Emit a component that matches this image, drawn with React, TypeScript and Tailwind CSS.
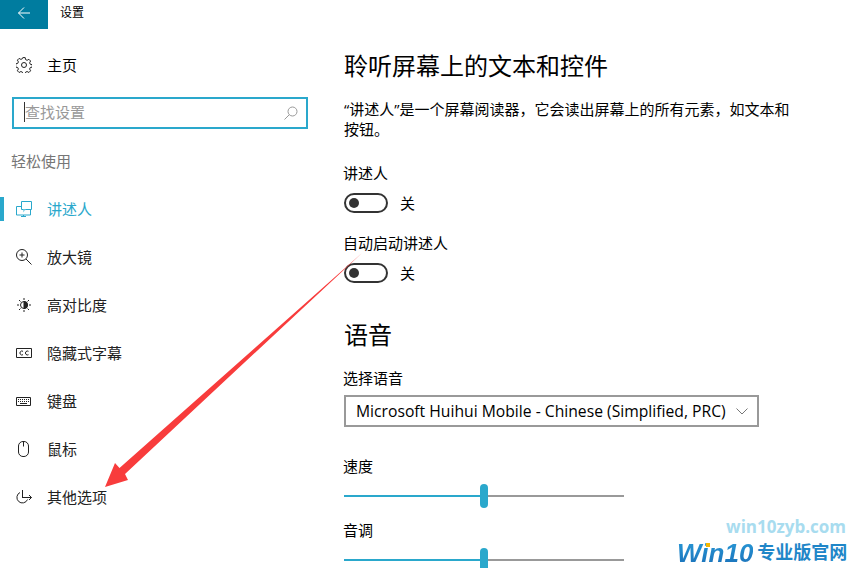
import type { ReactNode } from "react";

const iconProps = {
	width: 16,
	height: 16,
	viewBox: "0 0 16 16",
	fill: "none",
	stroke: "currentColor",
	strokeWidth: 1,
};

const navItems: { label: string; active?: boolean; icon: ReactNode }[] = [
	{
		label: "讲述人",
		active: true,
		icon: (
			<svg {...iconProps}>
				<path d="M5.500 .5h10v8H5.500zM5.500 5.500H.5v8.500h14V8.500M7.500 14v1.500M5 15.500h5" />
				<path d="M7 8.500h3l-3 3z" fill="#9bd6e8" stroke="none" />
			</svg>
		),
	},
	{
		label: "放大镜",
		icon: (
			<svg {...iconProps}>
				<circle cx="6" cy="6" r="5.500" />
				<path d="M10 10l5.500 5.500M3.500 6h5M6 3.500v5" />
			</svg>
		),
	},
	{
		label: "高对比度",
		icon: (
			<svg {...iconProps}>
				<circle cx="8" cy="8" r="3.500" />
				<path d="M8 4.500a3.500 3.500 0 0 1 0 7z" fill="currentColor" />
				<path d="M8 1v2M8 13v2M1 8h2M13 8h2M3 3l1.500 1.500M11.500 11.500L13 13M3 13l1.500-1.500M11.500 4.500L13 3" />
			</svg>
		),
	},
	{
		label: "隐藏式字幕",
		icon: (
			<svg {...iconProps}>
				<path d="M.5 3.500h15v9H.5z" />
				<path d="M7 6.300a2 2 0 1 0 0 3.400M12.500 6.300a2 2 0 1 0 0 3.400" />
			</svg>
		),
	},
	{
		label: "键盘",
		icon: (
			<svg {...iconProps}>
				<path d="M.5 4.500h14v8H.5z" />
				<path d="M2 6.500h11M2 8.500h11" strokeDasharray="1 1" />
				<path d="M4 10.500h7" />
			</svg>
		),
	},
	{
		label: "鼠标",
		icon: (
			<svg {...iconProps}>
				<rect x="2.500" y=".5" width="10" height="15" rx="4.500" />
				<path d="M7.500 .5v5" />
			</svg>
		),
	},
	{
		label: "其他选项",
		icon: (
			<svg {...iconProps}>
				<path d="M4 3.500 A5.500 5.500 0 1 0 11.500 10.500" />
				<line x1="6.500" y1="1" x2="6.500" y2="9" />
				<line x1="6.500" y1="8.500" x2="15.500" y2="8.500" />
				<line x1="13" y1="6" x2="15.500" y2="8.500" />
				<line x1="13" y1="11" x2="15.500" y2="8.500" />
			</svg>
		),
	},
];

function Toggle() {
	return (
		<div className="mt-[10px] flex h-5 items-center">
			<div className="flex h-5 w-11 items-center rounded-full border-2 border-[#333] pl-[3px]">
				<div className="h-2.5 w-2.5 rounded-full bg-[#333]" />
			</div>
			<span className="ml-3 text-[15px] text-black">关</span>
		</div>
	);
}

function Slider() {
	return (
		<div className="mt-2 flex h-6 w-[280px] items-center">
			<div className="h-0.5 w-[136px] bg-[#2aa8cc]" />
			<div className="h-6 w-2 rounded-full bg-[#2aa8cc]" />
			<div className="h-0.5 flex-1 bg-[#999]" />
		</div>
	);
}

export default function App() {
	return (
		<div
			className="relative h-[568px] w-[853px] overflow-hidden bg-white text-black"
			style={{ fontFamily: '"Open Sans", "Noto Sans CJK SC", sans-serif' }}
		>
			<header className="flex h-[29px] items-center">
				<div className="flex h-[29px] w-12 items-center justify-center bg-[#007c9f] text-white">
					<svg width="14" height="14" viewBox="0 0 14 14" fill="none" stroke="currentColor" className="-mt-[3px]">
						<path d="M13 7H1.500M7 1.500L1.500 7 7 12.500" />
					</svg>
				</div>
				<span className="ml-3 -mt-1 text-xs">设置</span>
			</header>

			<div className="flex">
				<aside className="w-[344px]">
					<div className="mt-[12px] flex h-[48px] items-center pl-4">
						<svg width="16" height="16" viewBox="0 0 16 16" fill="none" stroke="#222">
							<circle cx="8" cy="8" r="2.500" />
							<path d="M6.800.6h2.400l.4 2 1.500.7 1.800-1 1.700 1.700-1 1.800.7 1.500 2 .4v2.400l-2 .4-.7 1.500 1 1.800-1.700 1.700-1.800-1-1.500.7-.4 2H6.800l-.4-2-1.500-.7-1.800 1-1.700-1.700 1-1.800-.7-1.500-2-.4V6.800l2-.4.7-1.500-1-1.800 1.700-1.700 1.800 1 1.500-.7z" />
						</svg>
						<span className="ml-[15px] text-[15px]">主页</span>
					</div>

					<div className="ml-3 mt-[8px] flex h-8 w-[296px] items-center border-2 border-[#2aa8cc] pl-[10px] pr-2">
						<span className="-mt-0.5 border-l border-[#333] text-[15px] leading-[20px] text-[#999]">查找设置</span>
						<svg className="ml-auto" width="14" height="14" viewBox="0 0 14 14" fill="none" stroke="#999">
							<circle cx="8.500" cy="5.500" r="4.500" />
							<path d="M5.200 8.800L.5 13.500" />
						</svg>
					</div>

					<div className="ml-[11px] mt-[22px] text-[15px] leading-5 text-[#767676]">轻松使用</div>

					<nav className="mt-[14px]">
						{navItems.map((item) => (
							<div key={item.label} className="relative flex h-12 items-center pl-4">
								{item.active && <div className="absolute left-0 top-[12px] h-6 w-1 bg-[#2aa8cc]" />}
								<span className={item.active ? "text-[#2aa8cc]" : "text-[#222]"}>{item.icon}</span>
								<span className={`ml-[15px] text-[15px] ${item.active ? "text-[#2aa8cc]" : "text-[#222]"}`}>
									{item.label}
								</span>
							</div>
						))}
					</nav>
				</aside>

				<main className="flex-1">
					<h1 className="mt-[19px] text-2xl leading-9">聆听屏幕上的文本和控件</h1>
					<p className="mt-[15px] w-[460px] text-[15px] leading-5">
						“讲述人”是一个屏幕阅读器，它会读出屏幕上的所有元素，如文本和按钮。
					</p>

					<div className="-ml-px mt-[24px] text-[15px] leading-5">讲述人</div>
					<Toggle />
					<div className="-ml-px mt-5 text-[15px] leading-5">自动启动讲述人</div>
					<Toggle />

					<h2 className="mt-[34px] text-2xl leading-9">语音</h2>
					<div className="-ml-px mt-[15px] text-[15px] leading-5">选择语音</div>
					<div className="mt-[7px] flex h-8 w-[415px] items-center justify-between border-2 border-[#999] pl-[10px] pr-[9px] text-[15.7px]">
						<span className="mt-px whitespace-nowrap">Microsoft Huihui Mobile - Chinese (Simplified, PRC)</span>
						<svg width="12" height="7" viewBox="0 0 12 7" fill="none" stroke="#777">
							<path d="M.5 .5L6 6l5.500-5.500" />
						</svg>
					</div>

					<div className="-ml-px mt-[29px] text-[15px] leading-5">速度</div>
					<Slider />
					<div className="-ml-px mt-3 text-[15px] leading-5">音调</div>
					<Slider />
				</main>
			</div>

			{/* red arrow painted over the page */}
			<svg className="absolute left-0 top-0" width="853" height="568" viewBox="0 0 853 568">
				<path d="M105 487L115 463 119.500 468 362 253 125 474 128 480z" fill="#f83c3c" />
			</svg>

			<div className="absolute right-[7px] top-[517px] text-[17px] font-bold leading-5 text-[#a8dcef]">
				win10zyb.com
			</div>
			<div
				className="absolute left-[677px] top-[538px] flex items-center whitespace-nowrap font-bold leading-[30px] text-[#1f86c8]"
				style={{ fontFamily: '"Liberation Sans", "Noto Sans CJK SC", sans-serif' }}
			>
				<span className="bg-linear-to-b from-[#2a9bd8] to-[#1a6fb8] bg-clip-text text-[26px] italic text-transparent">
					Win10
				</span>
				<span className="ml-[4px] text-[18px]">专业版官网</span>
				<span className="absolute left-[29px] top-[5px] h-1 w-1 bg-[#f5b800]" />
			</div>
		</div>
	);
}
